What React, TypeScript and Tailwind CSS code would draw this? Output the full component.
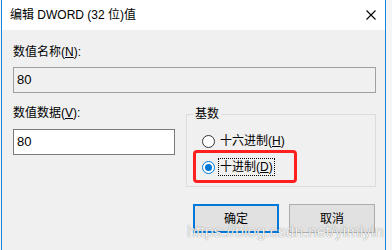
import React from 'react';

// DWORD edit dialog from the registry editor
const font = "font-['Liberation_Sans','Noto_Sans_CJK_SC',sans-serif]";

const Radio = ({ checked, label, hotkey, focused }: { checked?: boolean; label: string; hotkey: string; focused?: boolean }) => (
  <div className="flex items-center h-[20px]">
    <div
      className={`w-[13px] h-[13px] rounded-full bg-white border flex items-center justify-center ${
        checked ? 'border-[#0078d7]' : 'border-[#333333]'
      }`}
    >
      {checked && <div className="w-[7px] h-[7px] rounded-full bg-[#0078d7]" />}
    </div>
    <span
      className={`ml-[3px] px-[1px] leading-[16px] border ${
        focused ? 'border-dotted border-black' : 'border-transparent'
      }`}
    >
      {label}(<u>{hotkey}</u>)
    </span>
  </div>
);

export default function App() {
  return (
    <div className={`w-[392px] h-[250px] flex bg-[#f5f5f5] text-black text-[12px] ${font}`}>
      <div className="ml-[1px] w-[385px] h-full flex flex-col border-x border-[#1883d7] relative overflow-hidden">
        {/* title bar */}
        <div className="h-[30px] bg-white flex items-center justify-between pl-[8px] pr-[9px] shrink-0">
          <span className="text-[12px] leading-[16px]">编辑 DWORD (32 位)值</span>
          <svg width="10" height="10" viewBox="0 0 10 10">
            <path d="M0.5 0.5 L9.5 9.5 M9.5 0.5 L0.5 9.5" stroke="#000" strokeWidth="1.1" />
          </svg>
        </div>

        {/* body */}
        <div className="flex-1 bg-[#f0f0f0] pl-[11px] pr-[8px]">
          <div className="mt-[14px] leading-[16px]">
            数值名称(<u>N</u>):
          </div>
          <div className="mt-[7px] w-[363px] h-[26px] border border-[#a0a0a0] bg-[#f0f0f0] flex items-center pl-[3px] text-[13px]">
            80
          </div>

          <div className="mt-[12px] flex">
            <div className="w-[162px]">
              <div className="leading-[16px]">
                数值数据(<u>V</u>):
              </div>
              <div className="mt-[8px] h-[26px] border border-[#7a7a7a] bg-white flex items-center pl-[3px] text-[13px]">
                80
              </div>
            </div>

            <div className="ml-[11px] w-[190px] pt-[9px]">
              <div className="relative h-[73px] border border-[#dcdcdc]">
                <span className="absolute -top-[9px] left-[6px] px-[2px] bg-[#f0f0f0] leading-[16px]">基数</span>
                <div className="pl-[15px] pt-[16px] flex flex-col gap-[6px]">
                  <Radio label="十六进制" hotkey="H" />
                  <Radio label="十进制" hotkey="D" checked focused />
                </div>
                {/* red annotation box */}
                <div className="absolute left-[6px] top-[35px] w-[104px] h-[33px] border-[3px] border-[#ff1f1f] rounded-[4px]" />
              </div>
            </div>
          </div>

          <div className="mt-[17px] flex justify-end gap-[10px] pr-[2px]">
            <div className="w-[86px] h-[29px] border-2 border-[#0078d7] bg-[#e1e1e1] flex items-center justify-center">
              确定
            </div>
            <div className="w-[86px] h-[29px] border border-[#adadad] bg-[#e1e1e1] flex items-center justify-center">
              取消
            </div>
          </div>
        </div>

        {/* watermark */}
        <div className="absolute left-[185px] top-[222px] text-[16px] leading-[20px] text-white/90 font-['Liberation_Sans',sans-serif] [text-shadow:0_0_1px_rgba(0,0,0,0.55)] whitespace-nowrap">
          https://blog.csdn.net/yimiyin
        </div>
      </div>
    </div>
  );
}
